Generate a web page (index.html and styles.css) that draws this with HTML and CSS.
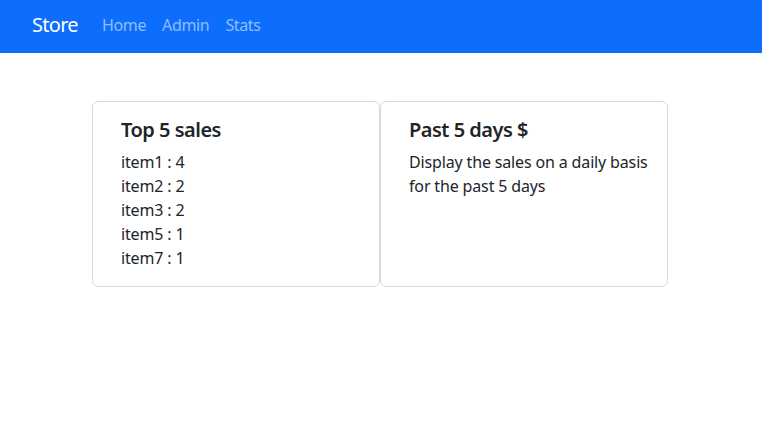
FILE: index.html
```html
<!DOCTYPE html>
<html lang="en">
<head>
<meta charset="utf-8">
<title>Store</title>
<link rel="stylesheet" href="styles.css">
</head>
<body>
<nav class="navbar">
  <a class="brand" href="#">Store</a>
  <ul class="nav-links">
    <li><a href="#">Home</a></li>
    <li><a href="#">Admin</a></li>
    <li><a href="#">Stats</a></li>
  </ul>
</nav>
<main class="content">
  <div class="cards">
    <section class="card">
      <h5 class="card-title">Top 5 sales</h5>
      <ul class="sales">
        <li>item1 : 4</li>
        <li>item2 : 2</li>
        <li>item3 : 2</li>
        <li>item5 : 1</li>
        <li>item7 : 1</li>
      </ul>
    </section>
    <section class="card">
      <h5 class="card-title">Past 5 days $</h5>
      <p class="card-text">Display the sales on a daily basis for the past 5 days</p>
    </section>
  </div>
</main>
</body>
</html>
```
FILE: styles.css
```css
* { box-sizing: border-box; }
body {
  margin: 0;
  font-family: "Noto Sans", "Open Sans", sans-serif;
  font-size: 16px;
  line-height: 1.5;
  letter-spacing: -0.15px;
  color: #212529;
  background: #fff;
}
.navbar {
  background: #0d6efd;
  height: 53px;
  display: flex;
  align-items: center;
  padding: 0 32px 3px;
}
.brand {
  color: #fff;
  text-decoration: none;
  font-size: 20px;
  line-height: 30px;
  letter-spacing: -0.7px;
  margin-right: 24px;
}
.nav-links {
  list-style: none;
  margin: 0;
  padding: 0;
  display: flex;
  gap: 16px;
}
.nav-links a {
  color: rgba(255,255,255,0.55);
  text-decoration: none;
  font-size: 16px;
  letter-spacing: -0.35px;
}
.content {
  padding-top: 48px;
  display: flex;
  justify-content: center;
}
.cards {
  display: flex;
  width: 576px;
  margin-left: -2px;
}
.card {
  width: 288px;
  border: 1px solid rgba(0,0,0,0.15);
  border-radius: 6px;
  padding: 16px 8px 16px 28px;
  min-height: 186px;
}
.card-title {
  margin: 0 0 8px;
  font-size: 20px;
  font-weight: 600;
  line-height: 1.2;
  letter-spacing: -0.5px;
}
.sales {
  list-style: none;
  margin: 0;
  padding: 0;
}
.card-text {
  margin: 0;
}
```
